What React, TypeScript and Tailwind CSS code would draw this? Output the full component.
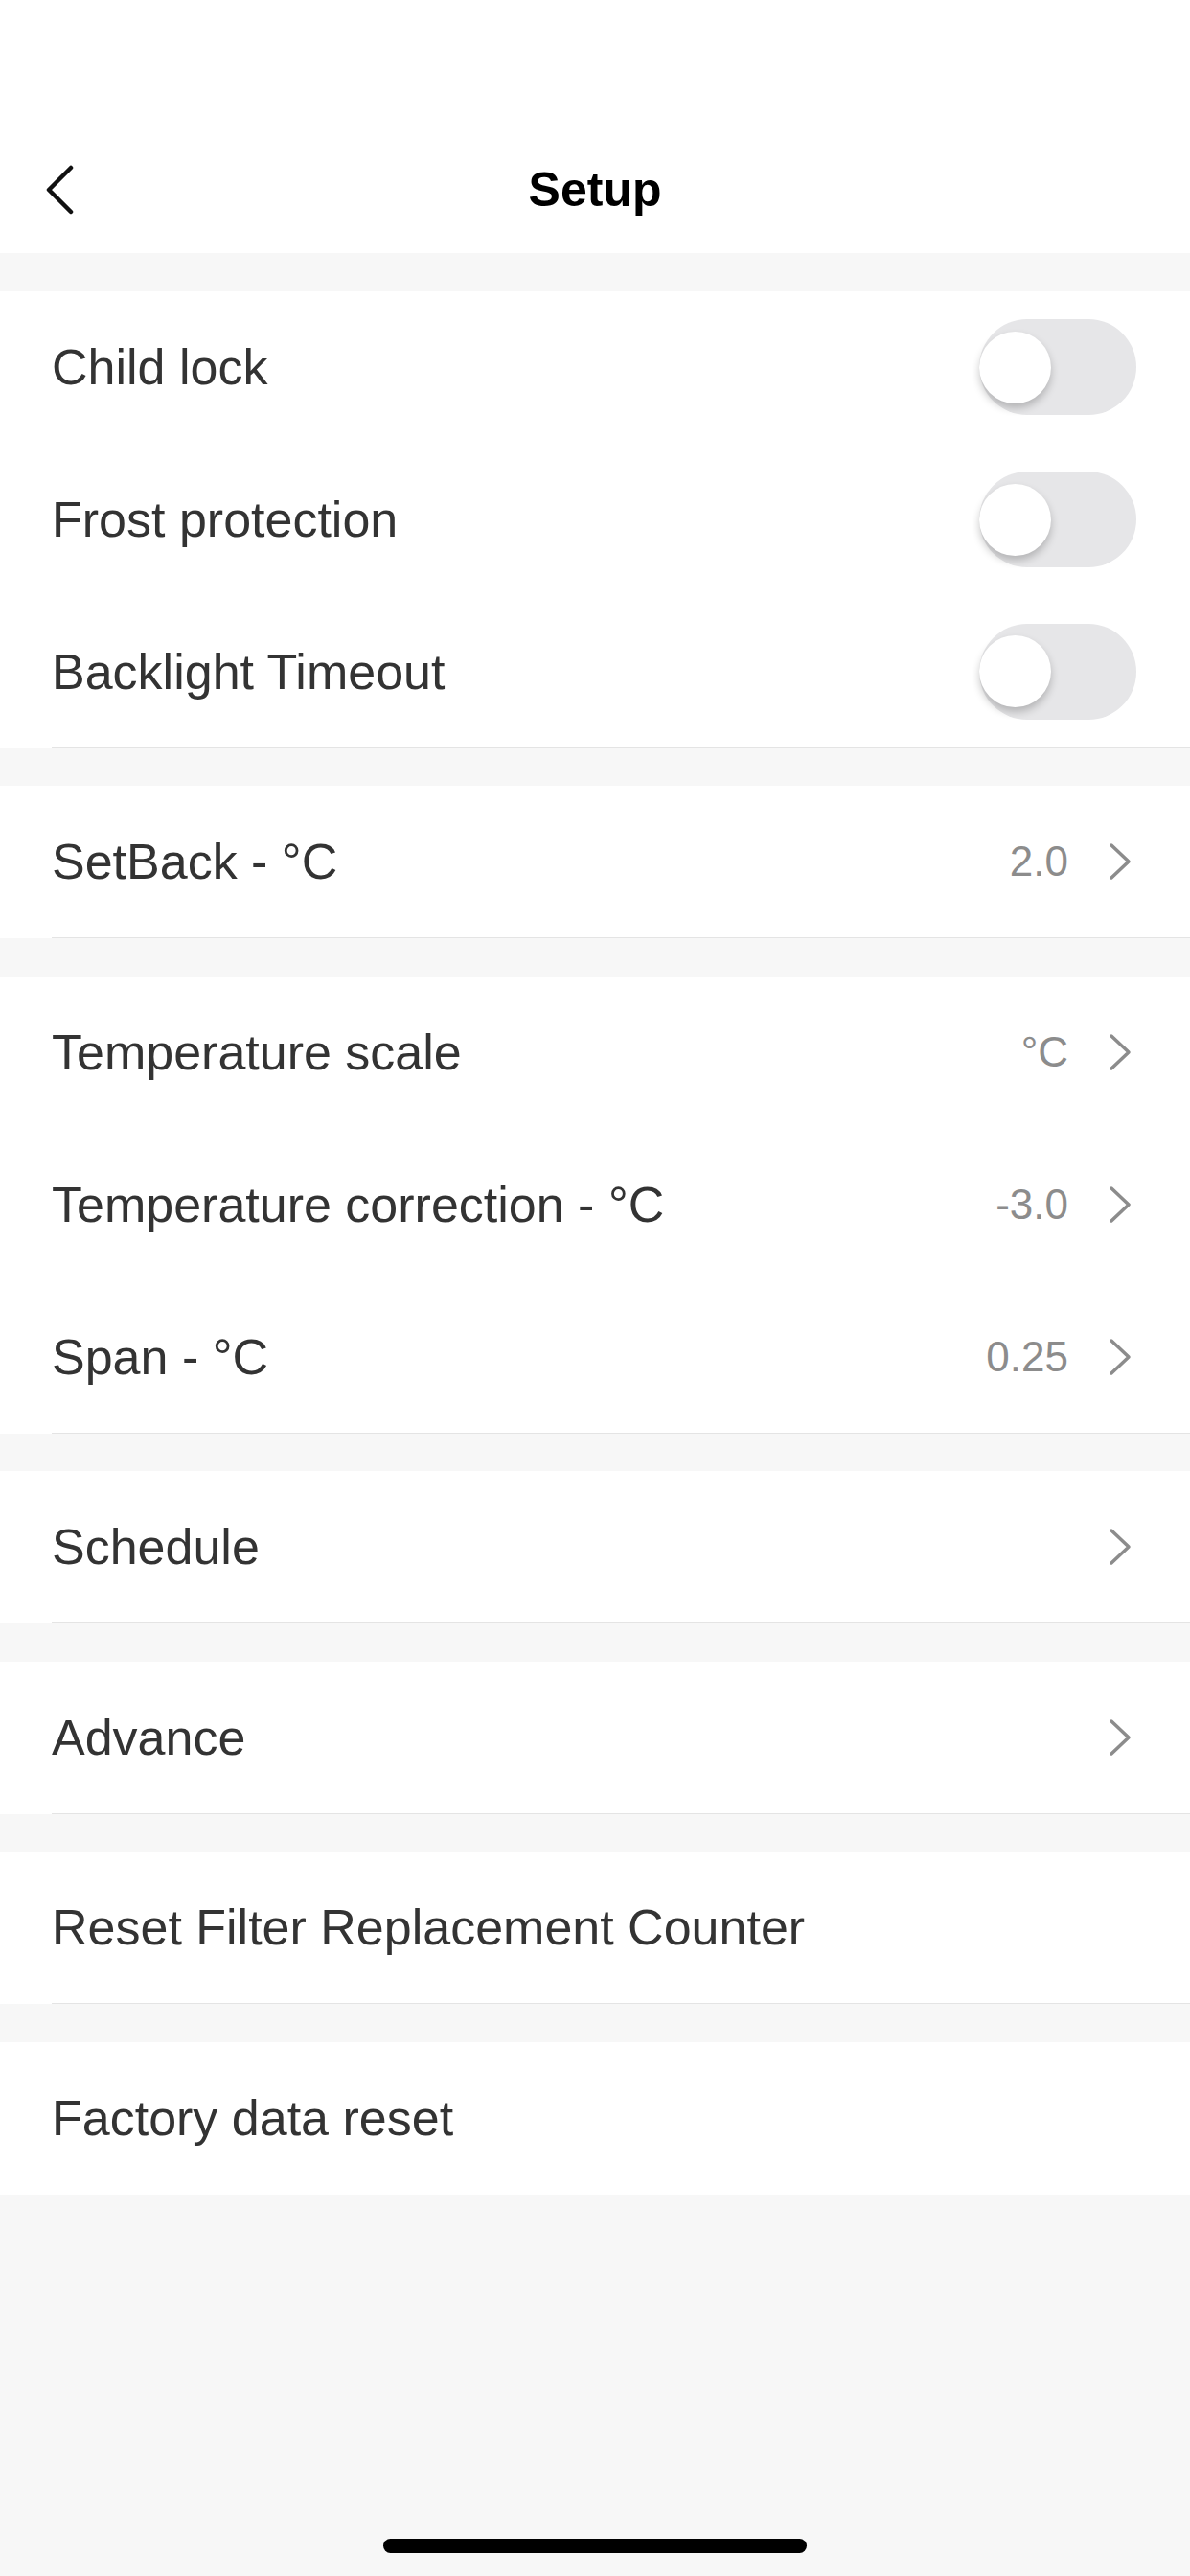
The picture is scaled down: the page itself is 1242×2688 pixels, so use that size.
import React from "react";

type Item = {
  label: string;
  kind: "toggle" | "link" | "plain";
  value?: string;
};

const sections: Item[][] = [
  [
    { label: "Child lock", kind: "toggle" },
    { label: "Frost protection", kind: "toggle" },
    { label: "Backlight Timeout", kind: "toggle" },
  ],
  [{ label: "SetBack - °C", kind: "link", value: "2.0" }],
  [
    { label: "Temperature scale", kind: "link", value: "°C" },
    { label: "Temperature correction - °C", kind: "link", value: "-3.0" },
    { label: "Span - °C", kind: "link", value: "0.25" },
  ],
  [{ label: "Schedule", kind: "link" }],
  [{ label: "Advance", kind: "link" }],
  [{ label: "Reset Filter Replacement Counter", kind: "plain" }],
  [{ label: "Factory data reset", kind: "plain" }],
];

const Toggle = () => (
  <div className="w-[164px] h-[100px] rounded-full bg-[#e6e6e8] flex items-center">
    <div className="w-[75px] h-[75px] rounded-full bg-white shadow-[0_5px_8px_rgba(0,0,0,0.22)]" />
  </div>
);

const Chevron = () => (
  <svg width="24" height="40" viewBox="0 0 24 40" fill="none">
    <path d="M3 3 L21 20 L3 37" stroke="#8c8c8c" strokeWidth="3.5" strokeLinecap="round" strokeLinejoin="round" />
  </svg>
);

const Row: React.FC<{ item: Item; divider: boolean }> = ({ item, divider }) => (
  <div
    className={`h-[159px] flex items-center justify-between ${
      item.kind === "toggle" ? "pr-[56px]" : "pr-[61px]"
    } ${divider ? "border-b border-[#e4e4e4]" : ""}`}
  >
    <span className="text-[52px] text-[#333333]">{item.label}</span>
    {item.kind === "toggle" && <Toggle />}
    {item.kind === "link" && (
      <div className="flex items-center gap-[42px]">
        {item.value && <span className="text-[44px] text-[#8c8c8c]">{item.value}</span>}
        <Chevron />
      </div>
    )}
  </div>
);

export default function App() {
  return (
    <div
      className="min-h-[2688px] bg-[#f7f7f7] flex flex-col"
      style={{ fontFamily: "'Liberation Sans', Arial, sans-serif" }}
    >
      <div className="bg-white h-[264px] flex items-end">
        <div className="h-[132px] w-full grid grid-cols-[1fr_auto_1fr] items-center">
          <div className="pl-[46px]">
            <svg width="32" height="52" viewBox="0 0 32 52" fill="none">
              <path d="M28 3 L5 26 L28 49" stroke="#111111" strokeWidth="4.5" strokeLinecap="round" strokeLinejoin="round" />
            </svg>
          </div>
          <h1 className="text-[50px] font-bold text-black">Setup</h1>
          <div />
        </div>
      </div>

      {sections.map((items, i) => (
        <div key={i} className="mt-[39.5px] bg-white pl-[54px]">
          {items.map((item, j) => (
            <Row
              key={item.label}
              item={item}
              divider={j === items.length - 1 && i < sections.length - 1}
            />
          ))}
        </div>
      ))}

      <div className="flex-1" />
      <div className="flex justify-center pb-[24px]">
        <div className="w-[442px] h-[15px] rounded-full bg-black" />
      </div>
    </div>
  );
}
